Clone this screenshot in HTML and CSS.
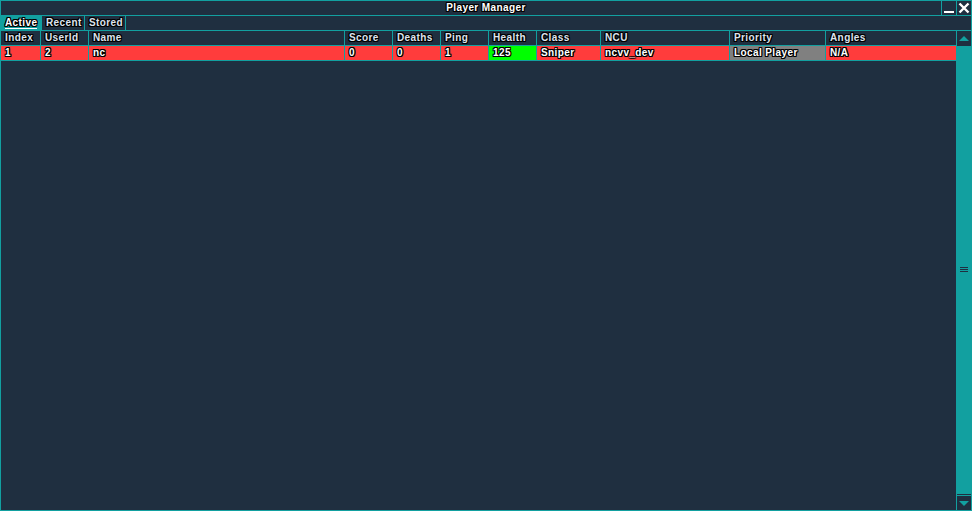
FILE: index.html
```html
<!DOCTYPE html>
<html>
<head>
<meta charset="utf-8">
<link rel="stylesheet" href="styles.css">
</head>
<body>
<div class="win">
  <div class="titlebar">
    <div class="title">Player Manager</div>
    <div class="tbtn">
      <svg width="14" height="14" viewBox="0 0 14 14"><rect x="2" y="10" width="10" height="2" fill="#fff"/></svg>
    </div>
    <div class="tbtn">
      <svg width="14" height="14" viewBox="0 0 14 14"><path d="M2.5 2.5 L11.5 11.5 M11.5 2.5 L2.5 11.5" stroke="#fff" stroke-width="2.4"/></svg>
    </div>
  </div>
  <div class="tabs">
    <div class="tab active"><span>Active</span></div>
    <div class="tab t2"><span>Recent</span></div>
    <div class="tab t3"><span>Stored</span></div>
  </div>
  <div class="body">
    <div class="table">
      <div class="row head">
        <div class="c w1">Index</div>
        <div class="c w2">UserId</div>
        <div class="c w3">Name</div>
        <div class="c w4">Score</div>
        <div class="c w5">Deaths</div>
        <div class="c w6">Ping</div>
        <div class="c w7">Health</div>
        <div class="c w8">Class</div>
        <div class="c w9">NCU</div>
        <div class="c w10">Priority</div>
        <div class="c w11">Angles</div>
      </div>
      <div class="row data">
        <div class="c w1">1</div>
        <div class="c w2">2</div>
        <div class="c w3">nc</div>
        <div class="c w4">0</div>
        <div class="c w5">0</div>
        <div class="c w6">1</div>
        <div class="c w7 green">125</div>
        <div class="c w8">Sniper</div>
        <div class="c w9">ncvv_dev</div>
        <div class="c w10 grey">Local Player</div>
        <div class="c w11">N/A</div>
      </div>
    </div>
    <div class="scroll">
      <div class="sbtn">
        <svg width="14" height="14" viewBox="0 0 14 14"><path d="M2 10 L12 10 L7 5 Z" fill="#12a0a0"/></svg>
      </div>
      <div class="thumb">
        <svg width="10" height="6" viewBox="0 0 10 6"><rect x="1" y="0" width="8" height="1" fill="#1f2f40"/><rect x="1" y="2" width="8" height="1" fill="#1f2f40"/><rect x="1" y="4" width="8" height="1" fill="#1f2f40"/></svg>
      </div>
      <div class="sbtn">
        <svg width="14" height="14" viewBox="0 0 14 14"><path d="M2 5 L12 5 L7 10 Z" fill="#12a0a0"/></svg>
      </div>
    </div>
  </div>
</div>
</body>
</html>
```
FILE: styles.css
```css
html, body {
  margin: 0;
  padding: 0;
  background: #1f2f40;
}
body {
  width: 972px;
  height: 511px;
  overflow: hidden;
  font-family: "Liberation Sans", Arial, sans-serif;
  font-weight: bold;
  font-size: 10px;
  letter-spacing: 0.4px;
  color: #ffffff;
}
.win {
  box-sizing: border-box;
  width: 972px;
  height: 511px;
  border: 1px solid #12a0a0;
  display: flex;
  flex-direction: column;
  background: #1f2f40;
}
.titlebar {
  height: 14px;
  display: flex;
  border-bottom: 1px solid #12a0a0;
  flex: none;
}
.title {
  flex: 1;
  text-align: center;
  line-height: 14px;
  padding-left: 30px;
  text-shadow: 1px 0 #000, -1px 0 #000, 0 1px #000, 0 -1px #000, 1px 1px #000, -1px -1px #000, 1px -1px #000, -1px 1px #000;
}
.tbtn {
  width: 14px;
  height: 14px;
  border-left: 1px solid #12a0a0;
  display: flex;
}
.tabs {
  height: 14px;
  display: flex;
  border-bottom: 1px solid #12a0a0;
  flex: none;
}
.tab {
  box-sizing: border-box;
  padding-left: 4px;
  line-height: 14px;
  height: 14px;
  border-right: 1px solid #12a0a0;
  color: #dde3ee;
  white-space: nowrap;
  text-shadow: 1px 0 #000, -1px 0 #000, 0 1px #000, 0 -1px #000, 1px 1px #000, -1px -1px #000, 1px -1px #000, -1px 1px #000;
}
.tab.active {
  width: 41px;
  background: #12a0a0;
}
.tab.active span {
  color: #fff;
  border-bottom: 1px solid #fff;
}
.t2 { width: 43px; }
.t3 { width: 41px; }
.body {
  flex: 1;
  display: flex;
  min-height: 0;
}
.table {
  flex: 1;
  display: flex;
  flex-direction: column;
}
.row {
  display: flex;
  height: 14px;
  border-bottom: 1px solid #12a0a0;
}
.c {
  box-sizing: border-box;
  height: 14px;
  line-height: 14px;
  padding-left: 4px;
  border-right: 1px solid #12a0a0;
  white-space: nowrap;
  overflow: hidden;
  text-shadow: 1px 0 #000, -1px 0 #000, 0 1px #000, 0 -1px #000, 1px 1px #000, -1px -1px #000, 1px -1px #000, -1px 1px #000;
}
.head .c { color: #dde3ee; }
.data { background: #ff3c3c; }
.data .c { color: #fff; }
.green { background: #00ff00; }
.grey { background: #808080; }
.w1 { width: 40px; }
.w2 { width: 48px; }
.w3 { width: 256px; }
.w4 { width: 48px; }
.w5 { width: 48px; }
.w6 { width: 48px; }
.w7 { width: 48px; }
.w8 { width: 64px; }
.w9 { width: 129px; }
.w10 { width: 96px; }
.w11 { flex: 1; border-right: none; }
.scroll {
  width: 14px;
  border-left: 1px solid #12a0a0;
  display: flex;
  flex-direction: column;
}
.sbtn {
  height: 14px;
  flex: none;
  display: flex;
}
.thumb {
  flex: 1;
  background: #12a0a0;
  border-top: 1px solid #1f2f40;
  border-bottom: 1px solid #1f2f40;
  display: flex;
  align-items: center;
  justify-content: center;
}
.thumb + .sbtn { border-top: 1px solid #12a0a0; }
```
